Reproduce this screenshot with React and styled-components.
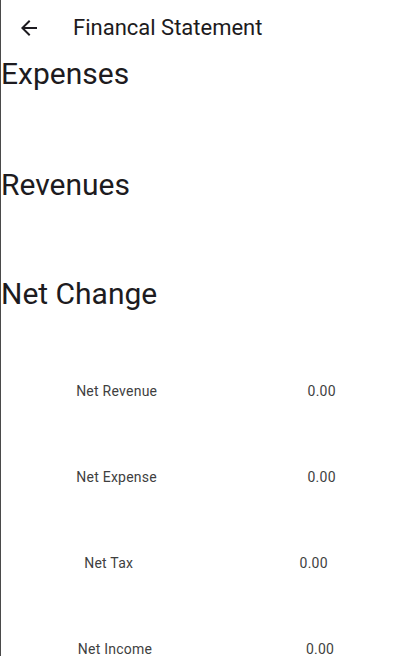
import styled, { createGlobalStyle } from 'styled-components';

// ── Global ─────────────────────────────────────────────────────────────────────

const GlobalStyle = createGlobalStyle`
  html, body {
    margin: 0;
    padding: 0;
    background: #ffffff;
  }
  body {
    font-family: Roboto, 'Noto Sans', sans-serif;
    color: #1d1b20;
  }
`;

// ── Styled Components ──────────────────────────────────────────────────────────

const Screen = styled.div`
  width: 411px;
  height: 656px;
  box-sizing: border-box;
  border-left: 1px solid #4a4a4a;
  background: #fff;
  overflow: hidden;
`;

const AppBar = styled.header`
  display: flex;
  align-items: center;
  height: 56px;
`;

const Leading = styled.button`
  width: 56px;
  height: 56px;
  display: flex;
  align-items: center;
  justify-content: center;
  border: none;
  background: transparent;
  padding: 0;
  color: #1d1b20;
  cursor: pointer;

  svg {
    width: 24px;
    height: 24px;
    fill: currentColor;
  }
`;

const Title = styled.h1`
  margin: 0 0 0 16px;
  font-size: 22px;
  font-weight: 400;
  line-height: 28px;
  color: #1d1b20;
`;

const Section = styled.section`
  padding-bottom: ${(p) => p.$space}px;
`;

const Heading = styled.h2`
  margin: 0;
  font-size: 30px;
  font-weight: 400;
  line-height: 36px;
  color: #1d1b20;
`;

const Rows = styled.div`
  display: flex;
  flex-direction: column;
  padding-top: 36px;
`;

const Row = styled.div`
  display: flex;
  justify-content: space-around;
  align-items: center;
  height: 86px;
  font-size: 14px;
  line-height: 20px;
  letter-spacing: 0.25px;
  color: #3f3f3f;
`;

// ── Data ───────────────────────────────────────────────────────────────────────

const totals = [
  { label: 'Net Revenue', value: 0 },
  { label: 'Net Expense', value: 0 },
  { label: 'Net Tax', value: 0 },
  { label: 'Net Income', value: 0 },
];

// ── Component ──────────────────────────────────────────────────────────────────

export default function App() {
  return (
    <>
      <GlobalStyle />
      <Screen>
        <AppBar>
          <Leading aria-label="Back">
            <svg viewBox="0 0 24 24">
              <path d="M20 11H7.83l5.59-5.59L12 4l-8 8 8 8 1.41-1.41L7.83 13H20v-2z" />
            </svg>
          </Leading>
          <Title>Financal Statement</Title>
        </AppBar>

        <Section $space={75}>
          <Heading>Expenses</Heading>
        </Section>

        <Section $space={73}>
          <Heading>Revenues</Heading>
        </Section>

        <Section $space={0}>
          <Heading>Net Change</Heading>
          <Rows>
            {totals.map((t) => (
              <Row key={t.label}>
                <span>{t.label}</span>
                <span>{t.value.toFixed(2)}</span>
              </Row>
            ))}
          </Rows>
        </Section>
      </Screen>
    </>
  );
}
